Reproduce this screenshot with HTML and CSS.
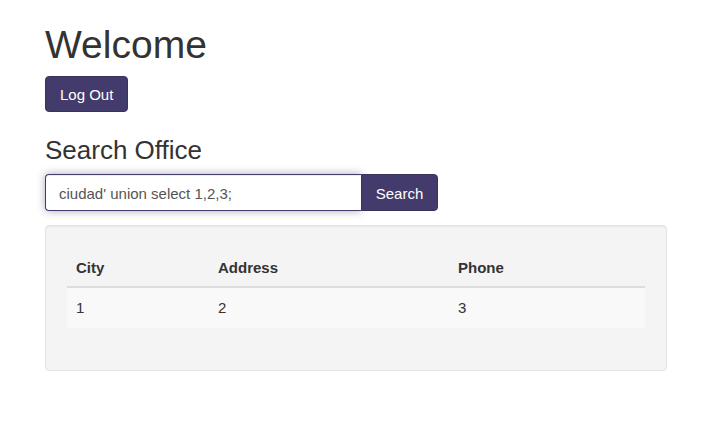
FILE: index.html
```html
<!DOCTYPE html>
<html>
<head>
<meta charset="utf-8">
<link rel="stylesheet" href="styles.css">
</head>
<body>
<div class="container">
  <h1 class="title">Welcome</h1>
  <button class="btn">Log Out</button>
  <h3 class="subtitle">Search Office</h3>
  <form class="search">
    <input class="search-input" type="text" value="ciudad' union select 1,2,3;">
    <button class="btn btn-search" type="button">Search</button>
  </form>
  <div class="well">
    <table class="table">
      <thead>
        <tr><th class="col-city">City</th><th class="col-addr">Address</th><th class="col-phone">Phone</th></tr>
      </thead>
      <tbody>
        <tr><td>1</td><td>2</td><td>3</td></tr>
      </tbody>
    </table>
  </div>
</div>
</body>
</html>
```
FILE: styles.css
```css
html, body {
  margin: 0;
  padding: 0;
  background: #fff;
}
body {
  font-family: "Liberation Sans", Arial, sans-serif;
  font-size: 15px;
  color: #333;
}
.container {
  width: 622px;
  margin-left: 45px;
  padding-top: 23px;
}
.title {
  font-size: 39px;
  font-weight: 400;
  line-height: 43px;
  margin: 0 0 10px;
}
.btn {
  display: block;
  font-family: inherit;
  font-size: 15px;
  line-height: 20px;
  padding: 8px 14px 6px;
  height: 36px;
  color: #fff;
  background: #433b6b;
  border: 1px solid #3a325e;
  border-radius: 4px;
  cursor: pointer;
}
.subtitle {
  font-size: 26px;
  font-weight: 400;
  line-height: 29px;
  margin: 24px 0 9px;
}
.search {
  display: flex;
  margin: 0 0 14px;
}
.search-input {
  box-sizing: border-box;
  width: 316px;
  height: 37px;
  padding: 8px 13px 6px;
  font-family: inherit;
  font-size: 15px;
  color: #555;
  border: 1px solid #433b6b;
  border-right: 0;
  border-radius: 4px 0 0 4px;
  outline: none;
  box-shadow: inset 0 1px 1px rgba(0,0,0,.075), 0 0 8px rgba(67,59,107,.45);
}
.btn-search {
  box-sizing: border-box;
  width: 77px;
  height: 37px;
  padding: 9px 0 6px;
  text-align: center;
  border-radius: 0 4px 4px 0;
}
.well {
  box-sizing: border-box;
  width: 622px;
  background: #f4f4f4;
  border: 1px solid #e3e3e3;
  border-radius: 4px;
  padding: 24px 21px 22px 21px;
  box-shadow: inset 0 1px 1px rgba(0,0,0,.05);
}
.table {
  width: 100%;
  border-collapse: collapse;
  border-spacing: 0;
  margin-bottom: 20px;
}
.table th, .table td {
  text-align: left;
  line-height: 20px;
  padding: 8px 9px;
}
.table th {
  font-weight: 700;
  border-bottom: 2px solid #ddd;
}
.table td {
  padding: 10px 9px;
}
.table tbody tr {
  background: #f9f9f9;
}
.col-city { width: 124px; }
.col-addr { width: 222px; }
```
